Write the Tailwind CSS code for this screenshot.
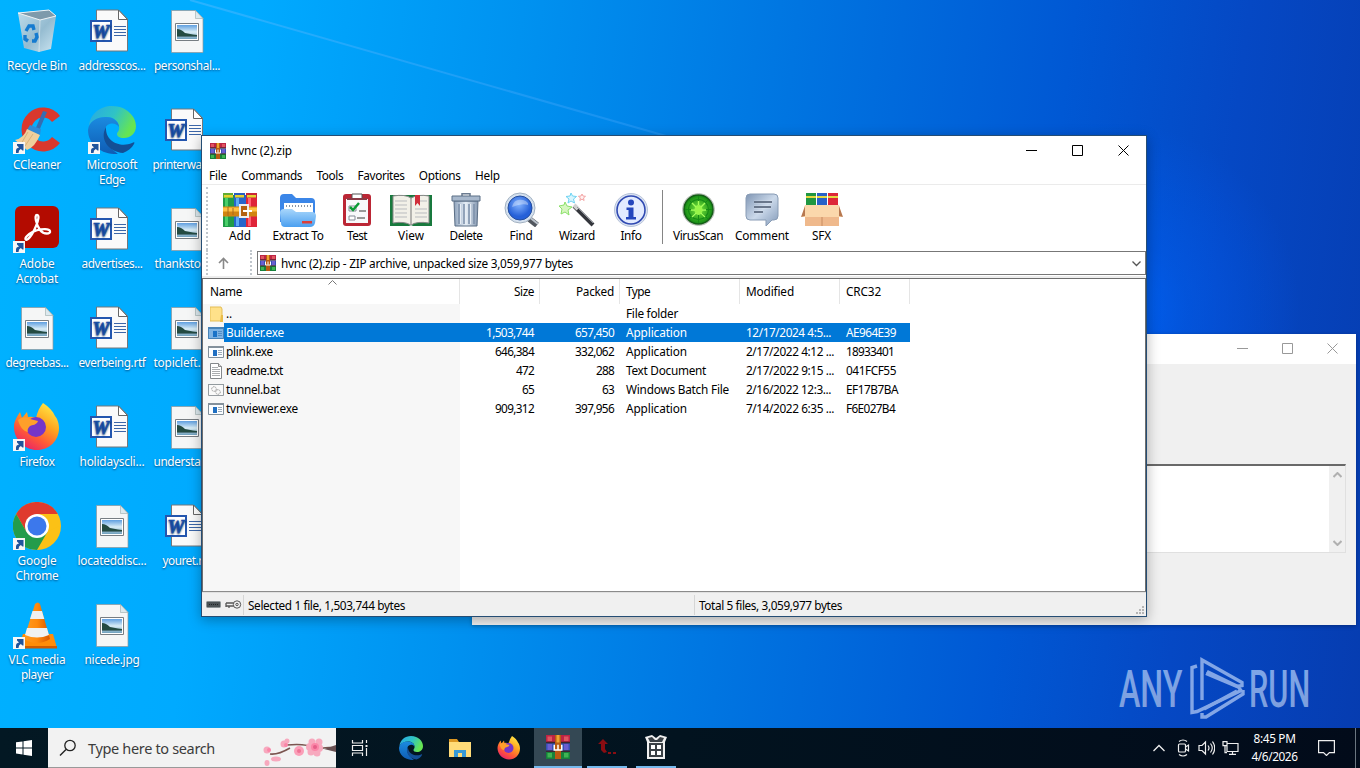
<!DOCTYPE html>
<html lang="en">
<head>
<meta charset="utf-8">
<title>Desktop</title>
<script src="https://cdn.jsdelivr.net/npm/@tailwindcss/browser@4"></script>
</head>
<body class="w-[1360px] h-[768px] overflow-hidden font-['Noto_Sans','Open_Sans',sans-serif] text-[11.800px] text-black">
<svg class="absolute w-0 h-0">
  <defs>
    <linearGradient id="gBin" x1="0" y1="0" x2="1" y2="1"><stop offset="0" stop-color="#d9e3ea"/><stop offset=".55" stop-color="#a9bdca"/><stop offset="1" stop-color="#e8edf0"/></linearGradient>
    <linearGradient id="gEdge1" x1="0" y1="0" x2="1" y2=".4"><stop offset="0" stop-color="#28a8e6"/><stop offset=".55" stop-color="#2fc3c6"/><stop offset="1" stop-color="#66e552"/></linearGradient>
    <linearGradient id="gEdge2" x1="0" y1="0" x2="0" y2="1"><stop offset="0" stop-color="#1b8be0"/><stop offset="1" stop-color="#0f5cb4"/></linearGradient>
    <linearGradient id="gFox" x1=".85" y1="0" x2=".25" y2="1"><stop offset="0" stop-color="#fff04a"/><stop offset=".4" stop-color="#ffa51f"/><stop offset=".7" stop-color="#ff5a36"/><stop offset="1" stop-color="#e81f6c"/></linearGradient>
    <linearGradient id="gFold" x1="0" y1="0" x2="0" y2="1"><stop offset="0" stop-color="#a8d6fb"/><stop offset="1" stop-color="#4a9ff0"/></linearGradient>
    <linearGradient id="gSteel" x1="0" y1="0" x2="1" y2="0"><stop offset="0" stop-color="#8fa3bc"/><stop offset=".5" stop-color="#e6eef6"/><stop offset="1" stop-color="#8497b0"/></linearGradient>
    <linearGradient id="gBub" x1="0" y1="0" x2="1" y2="1"><stop offset="0" stop-color="#8096b4"/><stop offset=".5" stop-color="#cbd9ea"/><stop offset="1" stop-color="#8299b8"/></linearGradient>
    <radialGradient id="gLens" cx=".45" cy=".35"><stop offset="0" stop-color="#84b4ff"/><stop offset="1" stop-color="#2560d8"/></radialGradient>
    <radialGradient id="gVir"><stop offset="0" stop-color="#7be63e"/><stop offset="1" stop-color="#128a14"/></radialGradient>
    <linearGradient id="gPic" x1="0" y1="0" x2="0" y2="1"><stop offset="0" stop-color="#5f9fe0"/><stop offset=".5" stop-color="#d9edf6"/><stop offset="1" stop-color="#6fa0bd"/></linearGradient>
    <linearGradient id="gCone" x1="0" y1="0" x2="1" y2="0"><stop offset="0" stop-color="#ff9b21"/><stop offset=".5" stop-color="#ff8a0c"/><stop offset="1" stop-color="#d85600"/></linearGradient>
    <linearGradient id="gMark" x1="0" y1="0" x2="0" y2="1"><stop offset="0" stop-color="#7fa8ea"/><stop offset="1" stop-color="#7d9ddb"/></linearGradient>
  </defs>
  <symbol id="shortcut" viewBox="0 0 12 12"><path d="M0 0h12v12H0z" fill="#f7f7f7"/><path d="M3 11V8.500Q3 6 6 5.500L4 3.500V2h6.500v6.500H9.500L7.800 7Q5.500 8 5.500 11z" fill="#20549c"/></symbol>
  <symbol id="word" viewBox="0 0 48 48"><path d="M14.500 3.500h22l9 9v32h-31z" transform="translate(0 -.5)" fill="#fafafa" stroke="#74777b"/><path d="M36.500 3v9.500h9z" fill="#fff" stroke="#666"/><path d="M32 19.500h12M32 22.500h12M32 25.500h12M32 28.500h12" stroke="#3c66a8"/><path d="M9 14h20v20H9z" fill="#fff" stroke="#2456ae" stroke-width="2"/><text x="10.500" y="30.500" font-family="Liberation Serif" font-size="19" font-weight="bold" font-style="italic" fill="#1e52ac" stroke="#1e52ac" stroke-width=".7" textLength="17" lengthAdjust="spacingAndGlyphs">W</text></symbol>
  <symbol id="pic" viewBox="0 0 48 48"><path d="M8.500 3.500h24l7.500 8v34H8.500z" fill="#f5f6f6" stroke="#8f9598" stroke-width=".7"/><path d="M32.500 3.500v8H40z" fill="#dce9ee" stroke="#9aa" stroke-width=".6"/><path d="M12.500 16.500h23v17h-23z" fill="#fff" stroke="#777d82"/><path d="M14 18h20v14H14z" fill="url(#gPic)"/><path d="M14 22q4 0 8 4l8 1.500 4 .5v1H14z" fill="#244b42"/><path d="M14 29h20v1H14z" fill="#51767e"/></symbol>
  <symbol id="edge" viewBox="0 0 48 48"><path d="M1 20C2 8 12 0 24 0c15 0 24 11 24 20 0 8-6 12-12 12-5 0-7-2-7-4 0-2 3-3 2-8-1-6-7-9-12-9C11 11 4 14 1 20z" fill="url(#gEdge1)"/><path d="M0 24C1 15 9 11 18 11c8 0 13 5 13 10-3-5-12-5-14 2-3 11 5 19 13 25C13 49 0 38 0 24z" fill="url(#gEdge2)"/><path d="M18 21c-7 12 3 25 17 26 5-2 9-5 11-9 1-2 0-2-2-1-11 5-27-1-26-16z" fill="#134f96"/></symbol>
  <symbol id="firefox" viewBox="0 0 48 48"><path d="M30 0c6 4 10 8 12 13 2 2 4 7 4 12 0 13-10 22-22 22S1 37 1 24C1 18 4 14 7 9l2 6 5-6 1 5q4-1 8 1 2-9 7-15z" fill="url(#gFox)"/><circle cx="23" cy="24" r="10" fill="#7635c8"/><path d="M5 17c3-3 8-4 12-1l8 2c-1 4-6 4-8 5-2 2-3 4-2 6-5-1-8-5-10-12z" fill="#ff9f2a"/></symbol>
  <symbol id="rar" viewBox="0 0 34 34"><path d="M0 2h11v32H0z" fill="#209b48"/><path d="M11 2h12v32H11z" fill="#2665cb"/><path d="M23 2h11v32H23z" fill="#df2438"/><path d="M2 5h3v28H2z" fill="#49cf68"/><path d="M13 5h3v28h-3z" fill="#5caaf5"/><path d="M25 5h3v28h-3z" fill="#ff6175"/><path d="M0 0h10v5H0z" fill="#62ad33"/><path d="M11 0h11v5H11z" fill="#285ec0"/><path d="M23 0h11v5H23z" fill="#c92638"/><path d="M1 2h9v2.500H1zM12 2h9v2.500h-9zM24 2h9v2.500h-9z" fill="#e6d22e"/><path d="M0 13.500h34v10H0z" fill="#d18410"/><path d="M0 14.500h34v4H0z" fill="#ffc143"/><path d="M5 14v9M10 15v7" stroke="#a86a1c"/><path d="M17 12h8v12h-8z" fill="#b26012" stroke="#eee" stroke-width="2"/><path d="M20 18h9" stroke="#fff" stroke-width="2"/></symbol>
  <symbol id="rarapp" viewBox="0 0 16 16"><path d="M0 0h16v5H0z" fill="#bd2444"/><path d="M0 5.500h16v5H0z" fill="#3650b4"/><path d="M0 11h16v5H0z" fill="#16813b"/><path d="M1 1h3v3H1zM12 1h3v3h-3z" fill="#df5560"/><path d="M1 6h3v4H1zM12 6h3v4h-3z" fill="#6b5ed0"/><path d="M1 12h3v3H1zM12 12h3v3h-3z" fill="#3fb453"/><path d="M0 5h16M0 10.800h16" stroke="#3c2430"/><path d="M6 0h4v16H6z" fill="#b85a12"/><path d="M7 0h2v5H7z" fill="#efa532"/><path d="M5.500 6.500v3.500h5V6.500M8 6.500v3" fill="none" stroke="#fff"/></symbol>
  <symbol id="exe" viewBox="0 0 16 14"><path d="M.5 1.500h15v11H.5z" fill="#fbfdff" stroke="#81909c"/><path d="M0 1h16v2H0z" fill="#83909b"/><path d="M5 5h4v6H5z" fill="#1f6fc2"/><path d="M10 5.500h4M10 7.500h4M10 9.500h4" stroke="#9baab8"/></symbol>
  <symbol id="min" viewBox="0 0 11 11"><path d="M0 5.500h11" stroke="currentColor"/></symbol>
  <symbol id="max" viewBox="0 0 11 11"><path d="M.5 .5h10v10H.5z" fill="none" stroke="currentColor"/></symbol>
  <symbol id="close" viewBox="0 0 11 11"><path d="M.5 .5l10 10M10.500 .5l-10 10" stroke="currentColor"/></symbol>
</svg>

<main class="relative w-[1360px] h-[768px] overflow-hidden bg-[linear-gradient(97deg,#00b2ff_0%,#00aaff_18%,#0092f0_36%,#0075e1_55%,#0058d4_74%,#0548c4_86%,#063cb0_100%)]">
  <svg class="absolute inset-0" width="1360" height="768">
    <defs>
      <radialGradient id="glow" gradientUnits="userSpaceOnUse" cx="1110" cy="310" r="190"><stop offset="0" stop-color="#0066ff" stop-opacity=".8"/><stop offset=".4" stop-color="#0062fa" stop-opacity=".4"/><stop offset="1" stop-color="#0060ff" stop-opacity="0"/></radialGradient>
      <linearGradient id="beam" x1="0" y1="0" x2="1" y2="0"><stop offset="0" stop-color="#45b8ff" stop-opacity=".6"/><stop offset="1" stop-color="#2d98f4" stop-opacity=".5"/></linearGradient>
    </defs>
    <circle cx="1110" cy="310" r="190" fill="url(#glow)"/>
    <path d="M190 0L680 140" stroke="url(#beam)" stroke-width="2"/>
  </svg>

  <!-- desktop shortcuts -->
  <section class="absolute left-0 top-[7px] grid grid-flow-col grid-rows-[repeat(7,99px)] auto-cols-[75px] ml-[-0.500px] text-white leading-[15px] text-center [text-shadow:0_1px_2px_rgba(0,40,90,.75)]">
    <div class="relative flex flex-col items-center gap-[3px]">
      <svg width="48" height="48" viewBox="0 0 48 48"><path d="M5 6l31-3 7 6-5 33-12 3-15-4z" fill="url(#gBin)" opacity=".88"/><path d="M5 6l31-3 7 6-16 4z" fill="#7e9aab" stroke="#f0f4f6"/><path d="M27 13l-1 32" stroke="#edf2f4" opacity=".6"/><g fill="none" stroke="#157bd0" stroke-width="3.400"><path d="M13 24l3-5h4l1 4M23 26l1 4-2 4h-3M15 34l-3-2 0-4"/></g></svg>
      <span data-w="60">Recycle Bin</span>
    </div>
    <div class="relative flex flex-col items-center gap-[3px]">
      <svg width="48" height="48" viewBox="0 0 48 48"><path d="M43 13A16.500 17 0 1 0 43 34" fill="none" stroke="#d9382d" stroke-width="10"/><path d="M30 5l4 1-8 19-4-1z" fill="#346db2"/><path d="M17 19l11 4-1 6-13-5z" fill="#2e8bd8"/><path d="M14 23l13 6q-5 12-13 15L2 34q9-2 12-11z" fill="#efcf9c"/><path d="M15 26l-7 12M20 28l-8 12" stroke="#d9b27a"/></svg>
      <svg class="absolute left-[13.500px] top-[36px]" width="12" height="12"><use href="#shortcut"/></svg>
      <span data-w="48">CCleaner</span>
    </div>
    <div class="relative flex flex-col items-center gap-[3px]">
      <svg width="48" height="48" viewBox="0 0 48 48"><rect x="2" y="1" width="44" height="42" rx="6" fill="#b30b00"/><path d="M24 10c-3 0-1 9 3 15 4 5 11 4 10 1s-15-3-23 5c-3 3-1 5 1 3C20 30 29 10 24 10z" fill="none" stroke="#fff" stroke-width="2.300"/></svg>
      <svg class="absolute left-[13.500px] top-[36px]" width="12" height="12"><use href="#shortcut"/></svg>
      <div class="flex flex-col items-center"><span data-w="35">Adobe</span><span data-w="42">Acrobat</span></div>
    </div>
    <div class="flex flex-col items-center gap-[3px]"><svg width="48" height="48"><use href="#pic"/></svg><span data-w="63">degreebas...</span></div>
    <div class="relative flex flex-col items-center gap-[3px]">
      <svg width="48" height="48"><use href="#firefox"/></svg>
      <svg class="absolute left-[13.500px] top-[36px]" width="12" height="12"><use href="#shortcut"/></svg>
      <span data-w="35">Firefox</span>
    </div>
    <div class="relative flex flex-col items-center gap-[3px]">
      <svg width="48" height="48" viewBox="0 0 48 48"><circle cx="24" cy="24" r="24" fill="#fbc116"/><path d="M3.200 12A24 24 0 0 1 44.800 12H24L13.600 30z" fill="#df3a2e"/><path d="M3.200 12A24 24 0 0 0 24 48L34.400 30H13.600z" fill="#239c4b"/><path d="M24 24h22L34 30z" fill="#fbc116"/><circle cx="24" cy="24" r="12" fill="#fff"/><circle cx="24" cy="24" r="9.500" fill="#3c78ec"/></svg>
      <svg class="absolute left-[13.500px] top-[36px]" width="12" height="12"><use href="#shortcut"/></svg>
      <div class="flex flex-col items-center"><span data-w="39">Google</span><span data-w="43">Chrome</span></div>
    </div>
    <div class="relative flex flex-col items-center gap-[3px]">
      <svg width="48" height="48" viewBox="0 0 48 48"><path d="M10 33h30l4 14H5z" fill="#ff8c08"/><path d="M5 45h39v2.500H5z" fill="#cf5b00"/><path d="M22 3q3-3 5 0l10 35q-13 8-26 0z" fill="url(#gCone)"/><path d="M19.500 10h9.500l2.300 8H17zM14 27h20l2 7q-12 5-24 0z" fill="#f0f1f1"/></svg>
      <svg class="absolute left-[13.500px] top-[36px]" width="12" height="12"><use href="#shortcut"/></svg>
      <div class="flex flex-col items-center"><span data-w="57">VLC media</span><span data-w="32">player</span></div>
    </div>
    <div class="flex flex-col items-center gap-[3px]"><svg width="48" height="48"><use href="#word" x="-6"/></svg><span data-w="67">addresscos...</span></div>
    <div class="relative flex flex-col items-center gap-[3px]">
      <svg width="48" height="48"><use href="#edge"/></svg>
      <svg class="absolute left-[13.500px] top-[36px]" width="12" height="12"><use href="#shortcut"/></svg>
      <div class="flex flex-col items-center"><span data-w="51">Microsoft</span><span data-w="26">Edge</span></div>
    </div>
    <div class="flex flex-col items-center gap-[3px]"><svg width="48" height="48"><use href="#word" x="-6"/></svg><span data-w="61">advertises...</span></div>
    <div class="flex flex-col items-center gap-[3px]"><svg width="48" height="48"><use href="#word" x="-6"/></svg><span data-w="67">everbeing.rtf</span></div>
    <div class="flex flex-col items-center gap-[3px]"><svg width="48" height="48"><use href="#word" x="-6"/></svg><span data-w="65">holidayscli...</span></div>
    <div class="flex flex-col items-center gap-[3px]"><svg width="48" height="48"><use href="#pic"/></svg><span data-w="69">locateddisc...</span></div>
    <div class="flex flex-col items-center gap-[3px]"><svg width="48" height="48"><use href="#pic"/></svg><span data-w="55">nicede.jpg</span></div>
    <div class="flex flex-col items-center gap-[3px]"><svg width="48" height="48"><use href="#pic"/></svg><span data-w="66">personshal...</span></div>
    <div class="flex flex-col gap-[3px]"><svg class="ml-[13.500px]" width="48" height="48"><use href="#word" x="-6"/></svg><span data-w="49" class="ml-[3px] w-[49px]">printerwa</span></div>
    <div class="flex flex-col gap-[3px]"><svg class="ml-[13.500px]" width="48" height="48"><use href="#pic"/></svg><span data-w="46" class="ml-[5px] w-[46px]">thanksto</span></div>
    <div class="flex flex-col gap-[3px]"><svg class="ml-[13.500px]" width="48" height="48"><use href="#pic"/></svg><span data-w="47" class="ml-[4px] w-[47px]">topicleft.</span></div>
    <div class="flex flex-col gap-[3px]"><svg class="ml-[13.500px]" width="48" height="48"><use href="#pic"/></svg><span data-w="47" class="ml-[4px] w-[47px]">understa</span></div>
    <div class="flex flex-col gap-[3px]"><svg class="ml-[13.500px]" width="48" height="48"><use href="#word" x="-6"/></svg><span data-w="40" class="ml-[13px] w-[40px]">youret.r</span></div>
  </section>

  <!-- watermark -->
  <svg class="absolute left-[1110px] top-[650px]" width="210" height="76" viewBox="1110 650 210 76" fill="url(#gMark)">
    <text x="0" y="0" transform="translate(1119 707) scale(.62 1)" font-family="Roboto" font-weight="500" font-size="52">ANY</text>
    <text x="0" y="0" transform="translate(1249 707) scale(.59 1)" font-family="Roboto" font-weight="500" font-size="52">RUN</text>
    <g fill="none" stroke="#83a6e6" stroke-width="3.400"><path d="M1197 666l-5 1.500v45l5-1 44-21-3-4-31-15"/><path d="M1202 700v-40l40 22.500v3l-5 1-31-13"/><path d="M1202 713v4h4l37-23v-4M1204 709l33-18"/></g>
  </svg>

  <!-- background window -->
  <section class="absolute left-[472px] top-[334px] w-[884px] h-[291px] bg-[#f0f0f0] flex flex-col shadow-[0_1px_4px_rgba(0,0,0,.3)]">
    <header class="h-[30px] bg-white flex items-center justify-end gap-[34px] pr-[18px] pb-[1px] text-[#999]">
      <svg width="11" height="11"><use href="#min"/></svg><svg width="11" height="11"><use href="#max"/></svg><svg width="11" height="11"><use href="#close"/></svg>
    </header>
    <div class="mt-[100px] mr-[10px] h-[89px] bg-white border-t-2 border-t-[#696969] border-r border-b border-r-[#e0e0e0] border-b-[#e0e0e0] flex justify-end">
      <div class="w-[16px] bg-[#f0f0f0] flex flex-col justify-between items-center py-[6px]">
        <svg width="9" height="6"><path d="M.5 5l4-4 4 4" fill="none" stroke="#b0b0b0" stroke-width="2"/></svg>
        <svg width="9" height="6"><path d="M.5 1l4 4 4-4" fill="none" stroke="#b0b0b0" stroke-width="2"/></svg>
      </div>
    </div>
  </section>

  <!-- archive window -->
  <section class="absolute left-[201px] top-[135px] w-[946px] h-[482px] border border-[#254d74] bg-white flex flex-col shadow-[0_3px_12px_rgba(0,0,0,.3)]">
    <header class="h-[29px] flex items-center pl-[8px] pr-[17px] shrink-0">
      <svg width="16" height="16"><use href="#rarapp"/></svg>
      <span data-w="61" class="ml-[5px]">hvnc (2).zip</span>
      <div class="ml-auto flex gap-[35px]"><svg width="11" height="11"><use href="#min"/></svg><svg width="11" height="11"><use href="#max"/></svg><svg width="11" height="11"><use href="#close"/></svg></div>
    </header>
    <nav class="h-[20px] pl-[7px] pt-[2px] flex items-center gap-[14.200px] border-b border-[#ebebeb] shrink-0">
      <span data-w="18">File</span><span data-w="61">Commands</span><span data-w="27">Tools</span><span data-w="47">Favorites</span><span data-w="42">Options</span><span data-w="25">Help</span>
    </nav>
    <div class="h-[65px] flex shrink-0 text-center leading-[17px]">
      <div class="w-[11px] flex items-end"><div class="ml-[4px] h-[63px] border-l-2 border-dotted border-[#c0c6cc]"></div></div>
      <div class="w-[54px] pt-[8px] flex flex-col items-center"><svg width="34" height="34"><use href="#rar"/></svg><span data-w="22">Add</span></div>
      <div class="w-[62px] pt-[8px] flex flex-col items-center"><svg width="38" height="34" viewBox="0 0 38 34"><path d="M1 5q0-4 4-4h8l4 4h15q4 0 4 4v20H1z" fill="#3b86e8"/><path d="M5 10h29v12H5z" fill="#fff"/><path d="M7 13h25" stroke="#667385" stroke-dasharray="1 2" stroke-width="1.500"/><path d="M5 16h8l4 3h16q4 0 4 4l-1 7q-1 4-5 4H6q-4 0-4-4L1 20q0-4 4-4z" fill="url(#gFold)"/><path d="M23 28h10v2.500H23z" fill="#dc3e38"/></svg><span data-w="51">Extract To</span></div>
      <div class="w-[56px] pt-[8px] flex flex-col items-center"><svg width="30" height="34" viewBox="0 0 30 34"><rect x="1" y="1" width="28" height="32" rx="3" fill="#bb2635"/><path d="M4 6h22v24H4z" fill="#f8f9fb"/><path d="M10 1h10v5H10z" fill="#fff" stroke="#555"/><path d="M5 6h20" stroke="#8a3c47" stroke-width="2"/><path d="M7 13h7v5H7zM7 23h6v4H7z" fill="#fff" stroke="#858b98"/><path d="M8 14l3 3 6-7" fill="none" stroke="#0b9b35" stroke-width="2.500"/><path d="M17 18h7M15 25h8" stroke="#999" stroke-width="2"/></svg><span data-w="20">Test</span></div>
      <div class="w-[52px] pt-[8px] flex flex-col items-center"><svg width="42" height="34" viewBox="0 0 42 34"><path d="M0 2h42v31H23l-2-1-2 1H0z" fill="#18793d"/><path d="M3 3q12-2 18 2 7-4 18-2v27q-12-2-18 2-7-4-18-2z" fill="#f2f0e8" stroke="#888"/><path d="M21 5v26" stroke="#777"/><path d="M5 8h12M5 12h12M5 16h12M5 20h12M5 24h12M30 8h7M25 16h12M25 20h12M25 24h12" stroke="#b9bbbe"/><path d="M25 2h5v11l-2.500-3-2.500 3z" fill="#d02e3b"/></svg><span data-w="26">View</span></div>
      <div class="w-[58px] pt-[8px] flex flex-col items-center"><svg width="30" height="34" viewBox="0 0 30 34"><path d="M3 8h24l-1 25H4z" fill="url(#gSteel)" stroke="#5b6e85"/><path d="M8 11v20M13 11v20M18 11v20M23 11v20" stroke="#7b8fa9" stroke-width="1.500"/><path d="M9.500 11v20M14.500 11v20M19.500 11v20" stroke="#e7edf4"/><path d="M11 3V.8h8V3" fill="none" stroke="#6b7b90" stroke-width="1.500"/><path d="M1 3h28v5H1z" fill="#a8b8cc" stroke="#5b6e85"/></svg><span data-w="33">Delete</span></div>
      <div class="w-[52px] pt-[7px] flex flex-col items-center"><svg width="36" height="35" viewBox="0 0 36 35"><path d="M25 26l9 7" stroke="#52575f" stroke-width="6"/><path d="M25 24l10 8" stroke="#bbc3cc" stroke-width="2"/><circle cx="17" cy="16" r="15" fill="#d5e1ef" stroke="#a2b1c1"/><circle cx="17" cy="16" r="12" fill="url(#gLens)" stroke="#244c9c"/><path d="M9 15q2-9 11-7 6 2 5 5-6-2-16 2z" fill="#fff" opacity=".35"/></svg><span data-w="23">Find</span></div>
      <div class="w-[60px] pt-[8px] flex flex-col items-center"><svg width="36" height="34" viewBox="0 0 36 34"><path d="M15 13l19 19" stroke="#34363c" stroke-width="4"/><path d="M15 12l4 4" stroke="#d0d0d0" stroke-width="4"/><path d="M18 14l16 16" stroke="#90949b"/><path d="M6 9l2 4 5 1-4 3 1 5-4-3-4 2 1-5-3-3 5-1z" fill="#d6f6c0" stroke="#8be06a"/><path d="M12 0l1.500 3 4 .5-3 2.500 1 4-3.500-2-3 2 1-4-3-2.500 4-.5z" fill="#d9f5fd" stroke="#6fd3f2"/><path d="M23 1l1 2 2.500 .3-2 1.600 .6 2.600-2.100-1.400-2.200 1.400 .6-2.600-2-1.600 2.600-.3z" fill="#fff0f0" stroke="#f4a5a5"/></svg><span data-w="36">Wizard</span></div>
      <div class="w-[48px] pt-[7px] flex flex-col items-center"><svg width="34" height="35" viewBox="0 0 34 35"><circle cx="17" cy="18" r="16.500" fill="#dce4f3" stroke="#b7c3d9"/><circle cx="17" cy="18" r="14" fill="#e3ebff" stroke="#304ab2" stroke-width="1.600"/><circle cx="17" cy="10.500" r="3" fill="#2446bd"/><path d="M12.500 15.500h7V25h2.500v2.500h-10V25h2.500v-7h-2z" fill="#2446bd"/></svg><span data-w="21">Info</span></div>
      <div class="w-[14px] pt-[5px]"><div class="ml-[7px] h-[54px] w-px bg-[#858585]"></div></div>
      <div class="w-[58px] pt-[7px] flex flex-col items-center"><svg width="34" height="35" viewBox="0 0 34 35"><circle cx="17.500" cy="17.500" r="16" fill="#dbe0db" stroke="#b7bbb7"/><circle cx="17.500" cy="17.500" r="14.500" fill="url(#gVir)" stroke="#155c17" stroke-width="1.500"/><circle cx="17.500" cy="17.500" r="10" fill="none" stroke="#168a16" stroke-width="1.200"/><path d="M17.500 4v27M4 17.500h27M8 8l19 19M27 8L8 27" stroke="#168a16" stroke-width="1"/><ellipse cx="17.500" cy="18" rx="4" ry="5" fill="#98f54a"/><path d="M11 11l4 4M24 11l-4 4M11 25l4-4M24 25l-4-4M10 18h4M21 18h4M17.500 9v4" stroke="#a5ff5b" stroke-width="1.400"/></svg><span data-w="50">VirusScan</span></div>
      <div class="w-[70px] pt-[8px] flex flex-col items-center"><svg width="34" height="34" viewBox="0 0 34 34"><path d="M5 1h24q4 0 4 4v18q0 4-4 4h-2l-6 6v-6H5q-4 0-4-4V5q0-4 4-4z" fill="url(#gBub)" stroke="#899cb5"/><path d="M9 9h18M9 14h17M9 19h9" stroke="#fff" stroke-width="2.500" opacity=".6"/><path d="M9 9h18M9 14h17M9 19h9" stroke="#42516a" stroke-width="1.500"/></svg><span data-w="54">Comment</span></div>
      <div class="w-[49px] pt-[8px] flex flex-col items-center"><svg width="42" height="34" viewBox="0 0 42 34"><path d="M5 0h10v13H5z" fill="#209742"/><path d="M16 0h10v13H16z" fill="#2862c8"/><path d="M27 0h10v13H27z" fill="#dd2739"/><path d="M5 4h10M16 4h10M27 4h10" stroke="#e5d840" stroke-width="2"/><path d="M4 12h34v21H4z" fill="#e9b282"/><path d="M4 12h34l3 12H1z" fill="#fbd8ac"/><path d="M4 13L0 24l4-1zM38 13l4 11-4-1z" fill="#b77850"/><path d="M4 24h34v9H4z" fill="#efb98c"/><path d="M21 24v9" stroke="#c78c60"/></svg><span data-w="19">SFX</span></div>
    </div>
    <div class="h-[26px] flex items-center shrink-0 pb-px">
      <div class="w-[54px] flex items-center h-full">
        <div class="ml-[4px] h-full border-l-2 border-dotted border-[#c0c6cc]"></div>
        <svg class="ml-[10px]" width="11" height="12"><path d="M5.500 12V2M1 6l4.500-4.500L10 6" fill="none" stroke="#888" stroke-width="1.600"/></svg>
        <div class="ml-auto mr-[4px] h-full border-l-2 border-dotted border-[#c0c6cc]"></div>
      </div>
      <div class="h-[24px] flex-1 border border-[#777] flex items-center pl-[2px] pr-[4px] ml-px">
        <svg width="16" height="16"><use href="#rarapp"/></svg>
        <span data-w="292" class="ml-[5px] pt-[2px]">hvnc (2).zip - ZIP archive, unpacked size 3,059,977 bytes</span>
        <svg class="ml-auto mt-[2px]" width="9" height="6"><path d="M.5 .5l4 4 4-4" fill="none" stroke="#555" stroke-width="1.300"/></svg>
      </div>
    </div>
    <div class="h-[2px] bg-[#ededed] shrink-0"></div>
    <div class="h-[314px] border border-[#6e6e6e] border-b-[#8b8b8b] flex flex-col shrink-0">
      <div class="relative h-[25px] flex items-center shrink-0 leading-[25px]">
        <svg class="absolute left-[125px] top-[1px]" width="9" height="5"><path d="M.5 4.500l4-4 4 4" fill="none" stroke="#777"/></svg>
        <div class="w-[257px] pl-[7px] border-r border-[#e5e5e5]"><span data-w="32">Name</span></div>
        <div class="w-[80px] pr-[5px] text-right border-r border-[#e5e5e5]"><span data-w="20">Size</span></div>
        <div class="w-[80px] pr-[5px] text-right border-r border-[#e5e5e5]"><span data-w="38">Packed</span></div>
        <div class="w-[120px] pl-[6px] border-r border-[#e5e5e5]"><span data-w="24">Type</span></div>
        <div class="w-[100px] pl-[6px] border-r border-[#e5e5e5]"><span data-w="48">Modified</span></div>
        <div class="w-[70px] pl-[6px] border-r border-[#e5e5e5]"><span data-w="35">CRC32</span></div>
      </div>
      <div class="flex-1 bg-[linear-gradient(90deg,#f7f7f7_257px,#fff_257px)] leading-[19px]">
        <div class="h-[19px] flex">
          <div class="w-[257px] pl-[7px] flex items-center"><svg width="13" height="16"><path d="M0 1h11l1 2v12H0z" fill="#ffe18a" stroke="#e4bd54"/><path d="M11 9h2v7h-3z" fill="#e9bc4a"/></svg><span data-w="6" class="ml-[3px]">..</span></div>
          <div class="w-[160px]"></div><div class="w-[120px] pl-[6px]"><span data-w="52">File folder</span></div>
        </div>
        <div class="h-[19px] w-[707px] flex text-white bg-[linear-gradient(90deg,transparent_21px,#0078d7_21px)]">
          <div class="w-[257px] pl-[5px] flex items-center"><div class="relative w-[16px] h-[14px]"><svg width="16" height="14"><use href="#exe"/></svg><div class="absolute inset-x-0 top-[1px] bottom-[1px] bg-[#1677ce]/55"></div></div><span data-w="58" class="ml-[2px]">Builder.exe</span></div>
          <div class="w-[80px] pr-[6px] text-right"><span data-w="48">1,503,744</span></div>
          <div class="w-[80px] pr-[6px] text-right"><span data-w="39">657,450</span></div>
          <div class="w-[120px] pl-[6px]"><span data-w="61">Application</span></div>
          <div class="w-[100px] pl-[6px]"><span data-w="85">12/17/2024 4:5...</span></div>
          <div class="w-[70px] pl-[6px]"><span data-w="50">AE964E39</span></div>
        </div>
        <div class="h-[19px] flex">
          <div class="w-[257px] pl-[5px] flex items-center"><svg width="16" height="14"><use href="#exe"/></svg><span data-w="47" class="ml-[2px]">plink.exe</span></div>
          <div class="w-[80px] pr-[6px] text-right"><span data-w="39">646,384</span></div>
          <div class="w-[80px] pr-[6px] text-right"><span data-w="39">332,062</span></div>
          <div class="w-[120px] pl-[6px]"><span data-w="61">Application</span></div>
          <div class="w-[100px] pl-[6px]"><span data-w="88">2/17/2022 4:12 ...</span></div>
          <div class="w-[70px] pl-[6px]"><span data-w="48">18933401</span></div>
        </div>
        <div class="h-[19px] flex">
          <div class="w-[257px] pl-[5px] flex items-center"><svg width="16" height="16"><path d="M2.500 .5h8l3 3v12h-11z" fill="#fff" stroke="#84888b"/><path d="M4 4.500h6M4 6.500h8M4 8.500h8M4 10.500h8M4 12.500h8" stroke="#aaadaf"/><path d="M10.500 .5v3h3" fill="#ddd" stroke="#888"/></svg><span data-w="57" class="ml-[2px]">readme.txt</span></div>
          <div class="w-[80px] pr-[6px] text-right"><span data-w="18">472</span></div>
          <div class="w-[80px] pr-[6px] text-right"><span data-w="18">288</span></div>
          <div class="w-[120px] pl-[6px]"><span data-w="80">Text Document</span></div>
          <div class="w-[100px] pl-[6px]"><span data-w="88">2/17/2022 9:15 ...</span></div>
          <div class="w-[70px] pl-[6px]"><span data-w="50">041FCF55</span></div>
        </div>
        <div class="h-[19px] flex">
          <div class="w-[257px] pl-[5px] flex items-center"><svg width="16" height="14"><path d="M.5 1.500h15v11H.5z" fill="#fafafa" stroke="#969ca1"/><path d="M0 1.500h16" stroke="#929a9e"/><circle cx="6" cy="6" r="2.300" fill="none" stroke="#999" stroke-dasharray="1.500 .7"/><circle cx="10" cy="9" r="2.300" fill="none" stroke="#999" stroke-dasharray="1.500 .7"/></svg><span data-w="54" class="ml-[2px]">tunnel.bat</span></div>
          <div class="w-[80px] pr-[6px] text-right"><span data-w="12">65</span></div>
          <div class="w-[80px] pr-[6px] text-right"><span data-w="12">63</span></div>
          <div class="w-[120px] pl-[6px]"><span data-w="103">Windows Batch File</span></div>
          <div class="w-[100px] pl-[6px]"><span data-w="85">2/16/2022 12:3...</span></div>
          <div class="w-[70px] pl-[6px]"><span data-w="52">EF17B7BA</span></div>
        </div>
        <div class="h-[19px] flex">
          <div class="w-[257px] pl-[5px] flex items-center"><svg width="16" height="14"><use href="#exe"/></svg><span data-w="72" class="ml-[2px]">tvnviewer.exe</span></div>
          <div class="w-[80px] pr-[6px] text-right"><span data-w="39">909,312</span></div>
          <div class="w-[80px] pr-[6px] text-right"><span data-w="39">397,956</span></div>
          <div class="w-[120px] pl-[6px]"><span data-w="61">Application</span></div>
          <div class="w-[100px] pl-[6px]"><span data-w="88">7/14/2022 6:35 ...</span></div>
          <div class="w-[70px] pl-[6px]"><span data-w="49">F6E027B4</span></div>
        </div>
      </div>
    </div>
    <footer class="relative flex-1 bg-[#f0f0f0] border-t border-[#e0e0e0] flex items-center">
      <svg class="ml-[4px]" width="36" height="14" viewBox="0 0 36 14"><rect x=".5" y="3.500" width="14" height="6" rx="1" fill="#4b5255" stroke="#8d9496"/><path d="M3 6.500h9" stroke="#202526" stroke-dasharray="1 1"/><path d="M20 5h10M20 8h9M20 5v4M23 8v2" fill="none" stroke="#555" stroke-width="1.300"/><circle cx="31" cy="6.500" r="3.700" fill="#eee" stroke="#555"/><circle cx="31" cy="6.500" r="1.200" fill="none" stroke="#555"/></svg>
      <div class="ml-[1px] w-[451px] h-[20px] leading-[21px] border-l border-[#d5d5d5] pl-[4px]"><span data-w="157">Selected 1 file, 1,503,744 bytes</span></div>
      <div class="h-[20px] leading-[21px] border-l border-[#d5d5d5] pl-[4px]"><span data-w="143">Total 5 files, 3,059,977 bytes</span></div>
      <svg class="absolute right-[2px] bottom-[2px]" width="8" height="8" fill="#b5b5b5"><path d="M6 0h2v2H6zM3 3h2v2H3zM6 3h2v2H6zM0 6h2v2H0zM3 6h2v2H3zM6 6h2v2H6z"/></svg>
    </footer>
  </section>

  <!-- taskbar -->
  <footer class="absolute left-0 bottom-0 w-full h-[40px] flex bg-[linear-gradient(90deg,#031823,#02131f_50%,#020b1a)] text-white">
    <div class="w-[48px] flex items-center justify-center"><svg width="16" height="16" fill="#fff"><path d="M0 2.300l6.500-.9v6H0zM7.500 1.200L16 0v7.400H7.500zM0 8.500h6.500v6L0 13.600zM7.500 8.500H16V16l-8.500-1.200z"/></svg></div>
    <div class="w-[288px] h-[40px] bg-[#f2f2f2] border-b border-[#999] text-[#3c3c3c] flex items-center">
      <svg class="ml-[11px]" width="18" height="18"><circle cx="11" cy="6.500" r="5.200" fill="none" stroke="#222" stroke-width="1.300"/><path d="M7 10.500l-6 6" stroke="#222" stroke-width="1.400"/></svg>
      <span data-w="127" class="ml-[11px] pt-[2px] text-[14.500px]">Type here to search</span>
      <svg class="ml-auto" width="74" height="36" viewBox="262 730 74 36">
        <path d="M336 748q-11-2-25 3M315 748q-10-5-28-3M290 748q-12 7-20 6" fill="none" stroke="#7b5550" stroke-width="1.600"/><path d="M336 745l-12 4 12 3z" fill="#695052"/>
        <g fill="#f7a9be"><circle cx="310" cy="747" r="4"/><circle cx="319" cy="748" r="4"/><circle cx="312" cy="742" r="3.500"/><circle cx="319" cy="742" r="3.500"/><circle cx="311" cy="752" r="3.500"/><circle cx="317" cy="753" r="3.500"/><circle cx="284" cy="744" r="3.500"/><circle cx="287" cy="741" r="2.500"/><circle cx="267" cy="750" r="3.500"/><ellipse cx="267" cy="763" rx="2.500" ry="3"/><ellipse cx="276" cy="759" rx="5" ry="2.500"/></g>
        <g fill="#fb86a8"><circle cx="315" cy="747" r="4"/><circle cx="315" cy="747" r="2" fill="#e55f88"/><circle cx="299" cy="751" r="5" fill="#fb9fb8"/><circle cx="299" cy="751" r="2" fill="#ee7395"/><circle cx="286" cy="745" r="2"/><circle cx="269" cy="750" r="2"/></g>
      </svg>
    </div>
    <div class="w-[48px] flex items-center justify-center"><svg width="18" height="16" fill="none" stroke="#eee" stroke-width="1.200"><path d="M1.500 0v3h10V0M1.500 16v-3h10v3M1.500 5.500h10v5h-10zM15.500 0v3M15.500 8v8"/><path d="M14.500 5h2v2h-2z" fill="#eee" stroke="none"/></svg></div>
    <div class="w-[54px] flex items-center justify-center"><svg width="24" height="24"><use href="#edge"/></svg></div>
    <div class="w-[44px] flex items-center justify-center"><svg width="22" height="20" viewBox="0 0 22 20"><path d="M0 1h8l2 3h12v15H0z" fill="#dc9721"/><path d="M0 4h22v15H0z" fill="#ffdb78"/><path d="M5 12h12v7h-4v-4H9v4H5z" fill="#3699d6"/></svg></div>
    <div class="w-[54px] flex items-center justify-center"><svg width="24" height="24"><use href="#firefox"/></svg></div>
    <div class="ml-[-2px] w-[48px] bg-[#344854] flex items-center justify-center border-b-2 border-[#76b9ed]"><svg width="24" height="24"><use href="#rarapp"/></svg></div>
    <div class="ml-[5px] w-[40px] flex items-center justify-center border-b-2 border-[#76b9ed]"><svg width="20" height="18" viewBox="0 0 20 18"><path d="M1 6l5-5 5 5H8v5l2 3-3 1-3-3V6z" fill="#8a0d12"/><path d="M11 14h3v2h-3zM16 14h3v2h-3z" fill="#8a0d12"/></svg></div>
    <div class="ml-[9px] w-[40px] flex items-center justify-center border-b-2 border-[#76b9ed]"><svg width="24" height="26" viewBox="0 0 24 26"><path d="M1 3l7-2 4 3 4-3 7 2-2 5v17H3V8z" fill="#f0f0f0"/><path d="M4 4l4-1 3 3h2l3-3 4 1-2 4H6z" fill="#3a4045"/><path d="M5 9h14v14H5z" fill="#3a4045"/><path d="M7 11h4v4H7zM13 11h4v4h-4zM7 17h4v4H7zM13 17h4v4h-4z" fill="#fff"/></svg></div>
    <div class="ml-auto flex items-center">
      <svg width="12" height="8"><path d="M.5 7L6 1.500 11.500 7" fill="none" stroke="#eee" stroke-width="1.300"/></svg>
      <svg class="ml-[11px]" width="14" height="18" fill="none" stroke="#eee" stroke-width="1.200"><rect x="2.500" y="5" width="7" height="8" rx="1"/><path d="M9.500 8l3-2v6l-3-2M3 2.500q4-3 8 0M3 15.500q4 3 8 0"/></svg>
      <svg class="ml-[8px]" width="17" height="16" fill="none" stroke="#eee" stroke-width="1.200"><path d="M1 5.500h3l3.500-3.500v12L4 10.500H1zM10 5.500q2 2.500 0 5M12.500 3.500q3.500 4.500 0 9M14.500 1.500q4.500 6.500 0 13"/></svg>
      <svg class="ml-[7px]" width="17" height="14" fill="none" stroke="#eee" stroke-width="1.200"><path d="M5 2.500h11v8H5zM10.500 10.500v3M7 13.400h7M1 .6h4v4H1zM3 4.600v7h2"/></svg>
      <div class="w-[71px] pb-[2px] text-center leading-[18px] flex flex-col items-center"><span data-w="42">8:45 PM</span><span data-w="46">4/6/2026</span></div>
      <svg class="ml-[8px] mr-[20px]" width="17" height="16"><path d="M.6 .6h15.800v12h-5L8.500 15.500l-3-2.900H.6z" fill="none" stroke="#eee" stroke-width="1.200"/></svg>
      <div class="w-[5px] h-[40px] border-l border-[#6b7680]"></div>
    </div>
  </footer>
</main>
<script>
  // Tighten or loosen each label so it fills its intended width.
  function fitLabels() {
    const labels = [...document.querySelectorAll('[data-w]')];
    labels.forEach(el => { el.style.whiteSpace = 'nowrap'; el.style.letterSpacing = '0px'; });
    const widths = labels.map(el => {
      const r = document.createRange();
      r.selectNodeContents(el);
      return r.getBoundingClientRect().width;
    });
    labels.forEach((el, i) => {
      el.style.letterSpacing = ((+el.dataset.w - widths[i]) / el.textContent.length) + 'px';
    });
  }
  fitLabels();
  // Refit once styles and fonts have settled.
  new ResizeObserver(fitLabels).observe(document.body);
  document.fonts.ready.then(fitLabels);
  document.fonts.addEventListener('loadingdone', fitLabels);
  window.addEventListener('load', () => { fitLabels(); requestAnimationFrame(fitLabels); });
  setTimeout(fitLabels, 60);
  setTimeout(fitLabels, 250);
</script>
</body>
</html>
